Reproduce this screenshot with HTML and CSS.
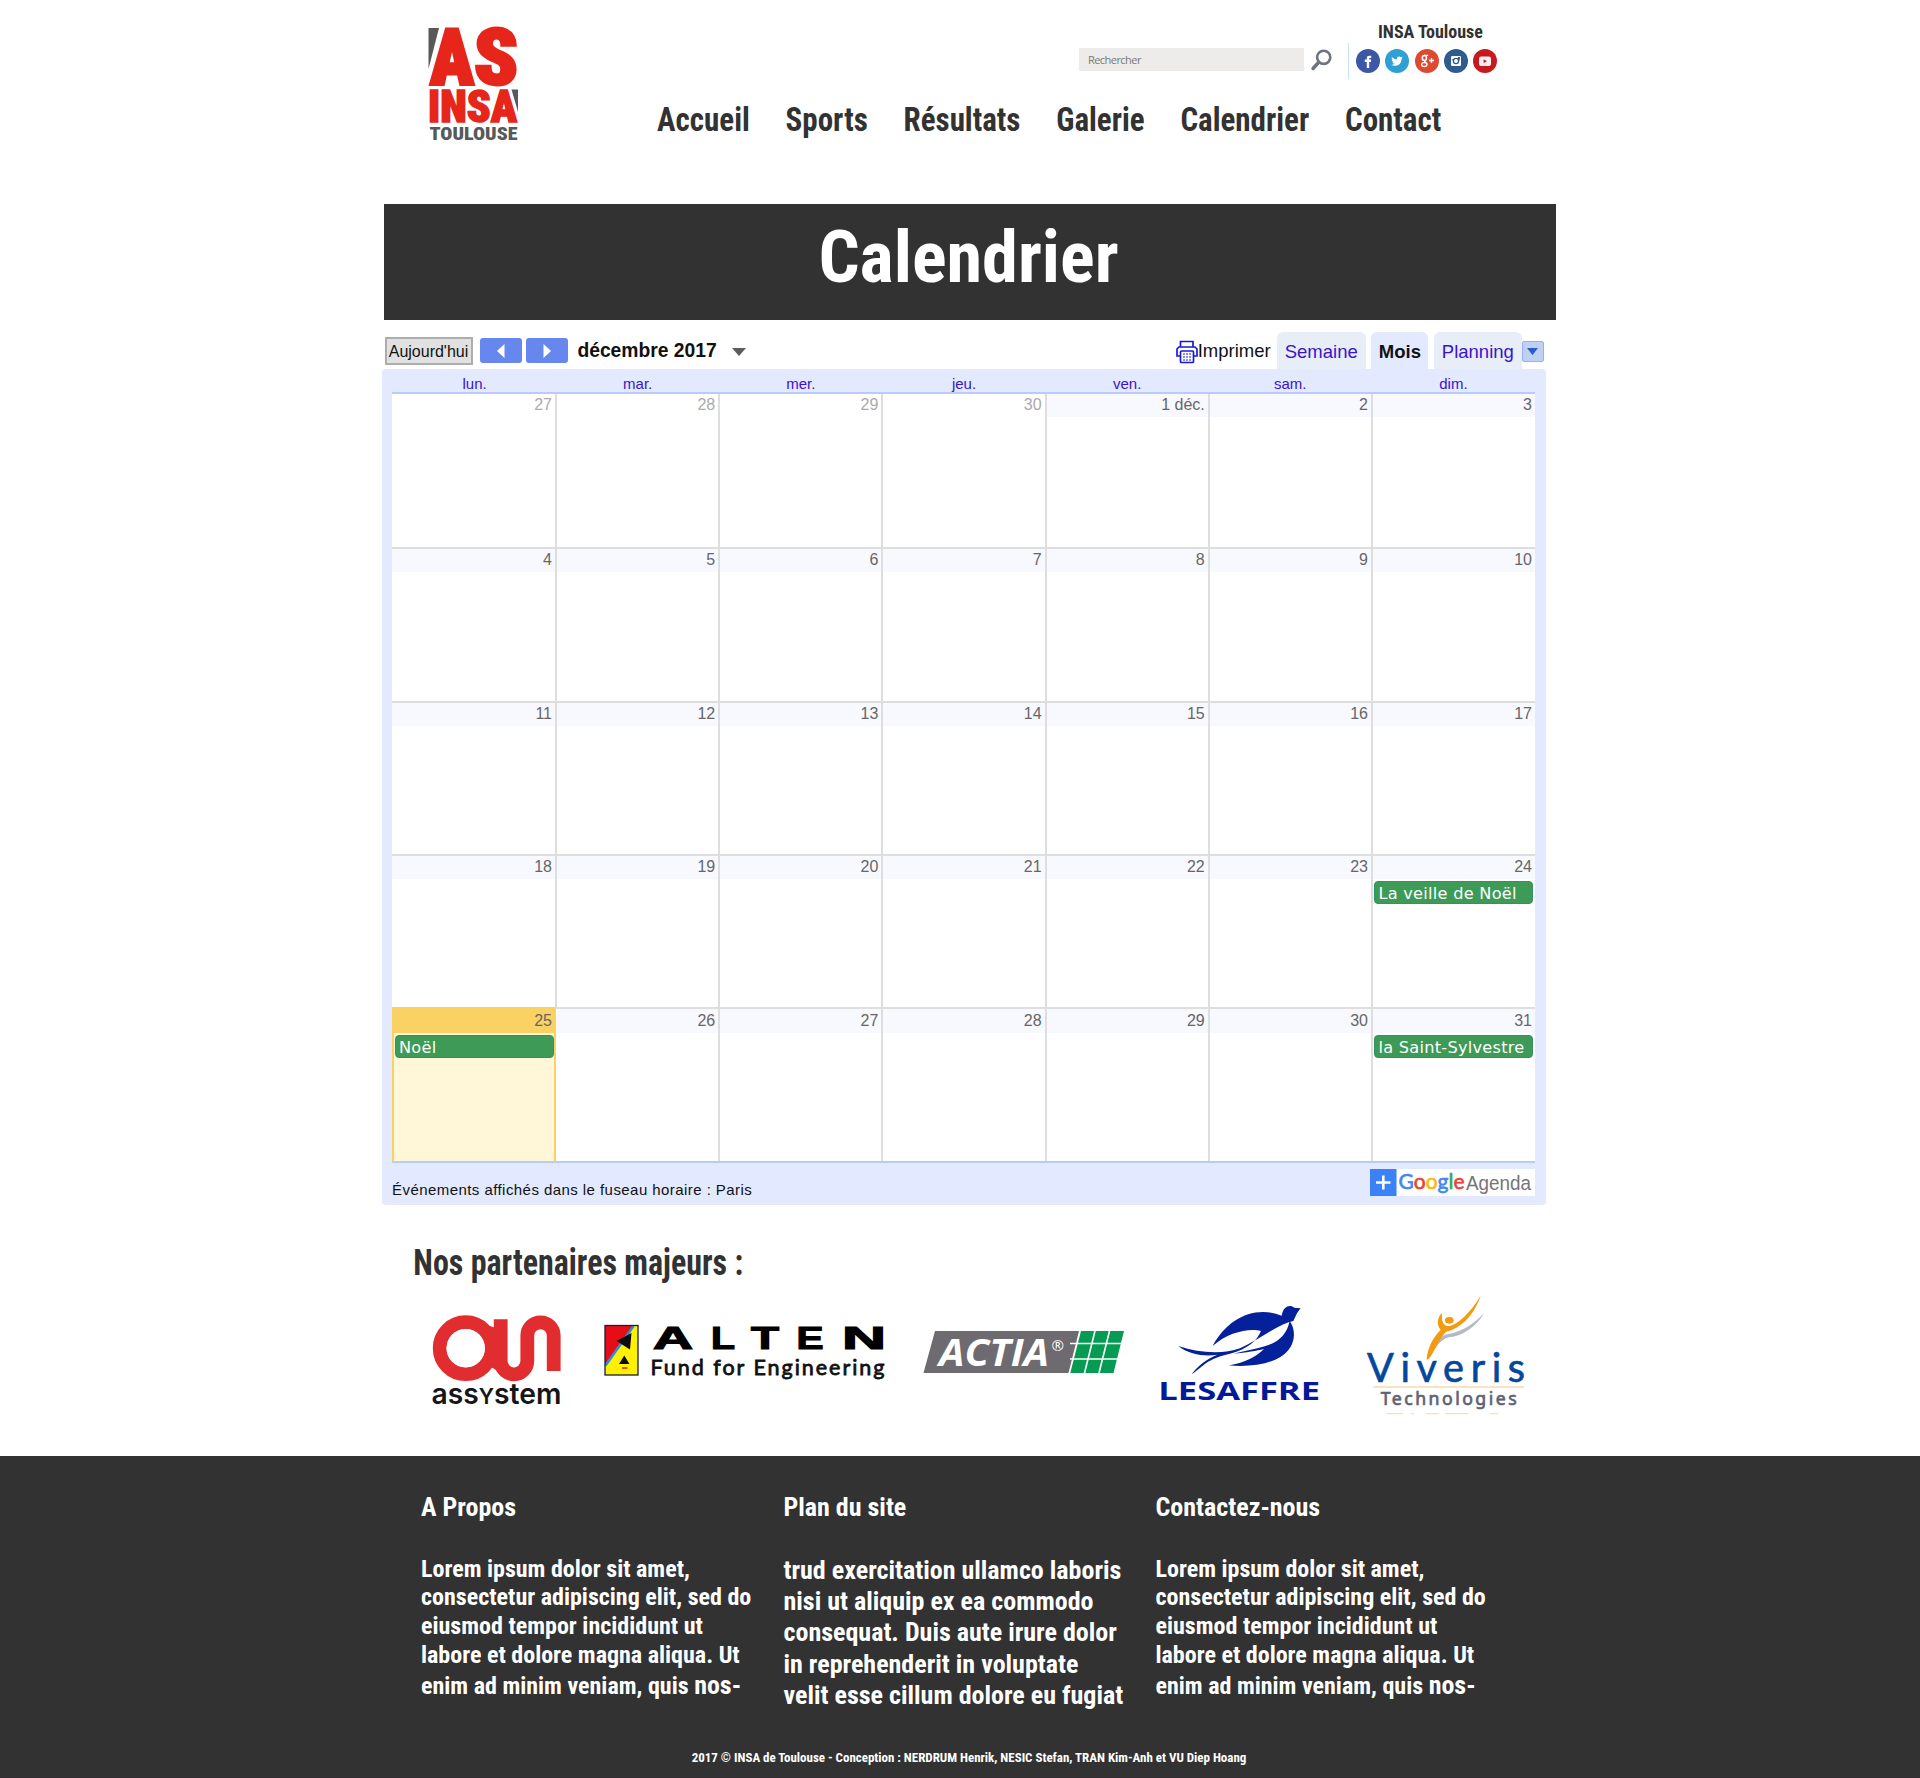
FILE: index.html
```html
<!DOCTYPE html>
<html lang="fr">
<head>
<meta charset="utf-8">
<title>AS INSA Toulouse - Calendrier</title>
<link rel="stylesheet" href="styles.css">
</head>
<body>
<div class="page">
  <header class="header">
    <a class="logo">
      <svg width="92" height="120" viewBox="427 24 92 120" font-family="Roboto">
        <path d="M428.5 28H439L428.5 69Z" fill="#58595b"/>
        <path d="M511.500 89.500H518V112Z" fill="#58595b"/>
        <g fill="#e6251b" stroke="#e6251b" class="narrow">
          <text x="430" y="84" font-size="78" stroke-width="3" textLength="44" lengthAdjust="spacingAndGlyphs">A</text>
          <text x="474" y="84" font-size="78" stroke-width="3" textLength="44" lengthAdjust="spacingAndGlyphs">S</text>
          <text x="428" y="121.500" font-size="44" stroke-width="1.500" textLength="89" lengthAdjust="spacingAndGlyphs">INSA</text>
        </g>
        <text x="429.500" y="140.300" font-size="19" fill="#58595b" textLength="88" lengthAdjust="spacingAndGlyphs" class="narrow">TOULOUSE</text>
      </svg>
    </a>
    <div class="header-main">
      <div class="tools">
        <div class="search">Rechercher</div>
        <svg class="search-icon" width="22" height="22" viewBox="0 0 22 22" fill="none" stroke="#6c7480">
          <circle cx="12.700" cy="8.300" r="6.600" stroke-width="2.600"/>
          <path d="M7.500 13.500L2 19.500" stroke-width="3.400" stroke-linecap="round"/>
        </svg>
        <div class="social">
          <div class="social-title">INSA Toulouse</div>
          <div class="social-row">
            <svg viewBox="0 0 24 24"><circle cx="12" cy="12" r="12" fill="#3d57a7"/><path d="M10.800 19V13H8.800V10.600H10.800V9.200C10.800 7 12 6.300 15.200 6.800V9H14.200C13.300 9 13.200 9.300 13.200 10V10.600H15.200L14.900 13H13.200V19Z" fill="#fff"/></svg>
            <svg viewBox="0 0 24 24"><circle cx="12" cy="12" r="12" fill="#2ea0d5"/><path transform="translate(6.200 6.400) scale(.48)" fill="#fff" d="M23.953 4.570a10 10 0 01-2.825.775 4.958 4.958 0 002.163-2.723c-.951.555-2.005.959-3.127 1.184a4.920 4.920 0 00-8.384 4.482C7.690 8.095 4.067 6.130 1.640 3.162a4.822 4.822 0 00-.666 2.475c0 1.710.870 3.213 2.188 4.096a4.904 4.904 0 01-2.228-.616v.060a4.923 4.923 0 003.946 4.827 4.996 4.996 0 01-2.212.085 4.936 4.936 0 004.604 3.417 9.867 9.867 0 01-6.102 2.105c-.390 0-.779-.023-1.170-.067a13.995 13.995 0 007.557 2.209c9.053 0 13.998-7.496 13.998-13.985 0-.210 0-.420-.015-.630A9.935 9.935 0 0024 4.590z"/></svg>
            <svg viewBox="0 0 24 24" fill="none" stroke="#fff"><circle cx="12" cy="12" r="12" fill="#dc4a31" stroke="none"/><ellipse cx="9.400" cy="9" rx="2.100" ry="2.500" stroke-width="1.500"/><path d="M9 6.300H13.200M9.800 11.500C8.400 12.500 11.800 13.300 12 15.400" stroke-width="1.300"/><ellipse cx="9.300" cy="15.600" rx="2.700" ry="1.900" stroke-width="1.300"/><path d="M16.500 9V14M14 11.500H19" stroke-width="1.400"/></svg>
            <svg viewBox="0 0 24 24"><circle cx="12" cy="12" r="12" fill="#2f5b8f"/><rect x="7" y="7" width="10" height="10" rx="1.200" fill="#fff"/><rect x="14" y="8" width="2" height="2" fill="#2f5b8f"/><circle cx="12" cy="12" r="2.600" fill="#fff" stroke="#2f5b8f" stroke-width="1.300"/><path d="M7.800 10.800H9.300M14.700 10.800H16.200" stroke="#2f5b8f"/></svg>
            <svg viewBox="0 0 24 24"><circle cx="12" cy="12" r="12" fill="#c71a1f"/><rect x="6" y="7.500" width="12" height="9.500" rx="2.200" fill="#f5f1f1"/><path d="M10.600 10.300L14 12.200L10.600 14.100Z" fill="#c71a1f"/></svg>
          </div>
        </div>
      </div>
      <nav class="nav"><a>Accueil</a><a>Sports</a><a>Résultats</a><a>Galerie</a><a>Calendrier</a><a>Contact</a></nav>
    </div>
  </header>

  <h1 class="banner">Calendrier</h1>

  <div class="toolbar">
    <button class="today-btn">Aujourd'hui</button>
    <button class="arrow"><svg width="8" height="14" viewBox="0 0 8 14"><path d="M7.500 0V14L0 7Z" fill="#fff"/></svg></button>
    <button class="arrow"><svg width="8" height="14" viewBox="0 0 8 14"><path d="M.5 0V14L8 7Z" fill="#fff"/></svg></button>
    <span class="month">décembre 2017</span>
    <svg class="month-caret" width="14" height="8" viewBox="0 0 14 8"><path d="M0 0H14L7 8Z" fill="#5c5c5c"/></svg>
    <svg class="print-icon" width="22" height="24" viewBox="0 0 22 24" fill="none" stroke="#1a1ad6" stroke-width="1.700">
      <path d="M4.500 7V1.500H17V7M4 16H1V9L3 7H19L21 9V16H18"/>
      <rect x="4.500" y="11" width="13" height="11.500" rx="1" fill="#fff"/>
      <path d="M7 14H15.500M7 17H15.500M7 20H15.500" stroke-width="1" stroke-dasharray="2 1"/>
    </svg>
    <span class="print">Imprimer</span>
    <div class="tabs"><a class="tab tab-week">Semaine</a><a class="tab tab-active">Mois</a><a class="tab tab-plan">Planning</a></div>
    <span class="more"><svg width="11" height="7" viewBox="0 0 11 7"><path d="M0 0H11L5.500 7Z" fill="#2a5bcc"/></svg></span>
  </div>

  <section class="calendar">
    <div class="weekdays"><span>lun.</span><span>mar.</span><span>mer.</span><span>jeu.</span><span>ven.</span><span>sam.</span><span>dim.</span></div>
    <div class="grid">
      <div class="day out"><b>27</b></div><div class="day out"><b>28</b></div><div class="day out"><b>29</b></div><div class="day out"><b>30</b></div><div class="day first"><b>1 déc.</b></div><div class="day first"><b>2</b></div><div class="day first"><b>3</b></div>
      <div class="day"><b>4</b></div><div class="day"><b>5</b></div><div class="day"><b>6</b></div><div class="day"><b>7</b></div><div class="day"><b>8</b></div><div class="day"><b>9</b></div><div class="day"><b>10</b></div>
      <div class="day"><b>11</b></div><div class="day"><b>12</b></div><div class="day"><b>13</b></div><div class="day"><b>14</b></div><div class="day"><b>15</b></div><div class="day"><b>16</b></div><div class="day"><b>17</b></div>
      <div class="day"><b>18</b></div><div class="day"><b>19</b></div><div class="day"><b>20</b></div><div class="day"><b>21</b></div><div class="day"><b>22</b></div><div class="day"><b>23</b></div><div class="day"><b>24</b><span class="event">La veille de Noël</span></div>
      <div class="day last today"><b>25</b><span class="event">Noël</span></div><div class="day last"><b>26</b></div><div class="day last"><b>27</b></div><div class="day last"><b>28</b></div><div class="day last"><b>29</b></div><div class="day last"><b>30</b></div><div class="day last"><b>31</b><span class="event">la Saint-Sylvestre</span></div>
    </div>
    <div class="calendar-foot">
      <span class="timezone">Événements affichés dans le fuseau horaire : Paris</span>
      <svg class="agenda" width="165" height="27" viewBox="0 0 165 27">
        <rect width="165" height="27" fill="#fff"/><rect width="26.500" height="27" fill="#3b82f8"/>
        <path d="M13.300 6.500V20.500M6 13.500H20.500" stroke="#fff" stroke-width="2.600"/>
        <text x="28.500" y="19.500" font-family="Lato" font-size="21" stroke-width=".6" textLength="66" lengthAdjust="spacingAndGlyphs"><tspan fill="#4285f4" stroke="#4285f4">G</tspan><tspan fill="#ea4335" stroke="#ea4335">o</tspan><tspan fill="#fbbc05" stroke="#fbbc05">o</tspan><tspan fill="#4285f4" stroke="#4285f4">g</tspan><tspan fill="#34a853" stroke="#34a853">l</tspan><tspan fill="#ea4335" stroke="#ea4335">e</tspan></text>
        <text x="96" y="21" font-family="Liberation Sans" font-size="20.500" fill="#757575" textLength="65" lengthAdjust="spacingAndGlyphs">Agenda</text>
      </svg>
    </div>
  </section>

  <section class="partners">
    <h2>Nos partenaires majeurs :</h2>
    <div class="partner-row">
      <svg width="136" height="130" viewBox="430 1290 136 130">
        <g fill="none" stroke="#e12d2f" stroke-width="13.800">
          <circle cx="465.700" cy="1348.200" r="26"/>
          <path d="M500.700 1319.300V1361A13.200 13.200 0 0 0 527.300 1361V1335.500A13.200 13.200 0 0 1 553.700 1335.500V1371"/>
        </g>
        <path d="M487 1325L496 1328V1370L486 1364Q492 1348 486 1336Z" fill="#e12d2f"/>
        <circle cx="465.700" cy="1348.200" r="19.200" fill="#fff"/>
        <text x="431.500" y="1404" font-family="Inter" font-weight="600" font-size="29" fill="#161616" textLength="130" lengthAdjust="spacingAndGlyphs">ass<tspan font-size="22">Y</tspan>stem</text>
      </svg>
      <svg width="288" height="130" viewBox="600 1290 288 130">
        <rect x="605" y="1325.500" width="33" height="49.500" fill="#fff100"/>
        <path d="M605 1325.500H633.500L605 1366Z" fill="#e60d17"/>
        <path d="M605.500 1365.500L633.500 1326" stroke="#2a8fd8" stroke-width="2.600"/>
        <path d="M631.500 1333L616.500 1341L630 1349.500ZM624.300 1355.500L619 1364H629.500Z" fill="#0c0c0c"/>
        <path d="M622 1368H627.500" stroke="#e6401b" stroke-width="1.800"/>
        <rect x="605" y="1325.500" width="33" height="49.500" fill="none" stroke="#1b1d3a" stroke-width="1.300"/>
        <g font-family="Liberation Sans" font-weight="700" font-size="31.500" fill="#000" stroke="#000" stroke-width="1.200">
          <text x="653" y="1348.500" textLength="40" lengthAdjust="spacingAndGlyphs">A</text>
          <text x="711" y="1348.500" textLength="24" lengthAdjust="spacingAndGlyphs">L</text>
          <text x="751" y="1348.500" textLength="28" lengthAdjust="spacingAndGlyphs">T</text>
          <text x="796.500" y="1348.500" textLength="27" lengthAdjust="spacingAndGlyphs">E</text>
          <text x="842" y="1348.500" textLength="44" lengthAdjust="spacingAndGlyphs">N</text>
        </g>
        <text x="650.500" y="1374.500" font-family="Lato" font-size="21.500" fill="#111" stroke="#111" stroke-width=".8" textLength="234">Fund for Engineering</text>
      </svg>
      <svg width="204" height="130" viewBox="922 1290 204 130">
        <path d="M935 1331H1079L1068.500 1373H923.500Z" fill="#6d6a70"/>
        <path d="M1081 1331H1124L1113.500 1373H1070.300Z" fill="#069b53"/>
        <path d="M1095 1331L1084.500 1373M1109.500 1331L1099 1373M1070 1343.500H1124M1070 1359H1124" stroke="#fff" stroke-width="1.600"/>
        <text x="939" y="1366" font-family="Open Sans" font-style="italic" font-weight="700" font-size="38" fill="#fff" textLength="110" lengthAdjust="spacingAndGlyphs">ACTIA</text>
        <text x="1051.500" y="1350.500" font-family="Open Sans" font-size="15" fill="#fff">®</text>
      </svg>
      <svg width="164" height="130" viewBox="1160 1290 164 130">
        <g transform="translate(1140 1285) scale(.33333)">
          <g fill="#04209a">
            <path d="M218 183C262 100 345 60 425 92C430 60 452 58 463 68L482 70C472 80 468 92 460 108L446 112C400 128 350 168 300 190C250 208 180 205 115 183C150 212 200 214 232 209C200 222 170 245 155 268C195 240 200 222 270 206C325 192 352 165 363 138C330 128 265 140 218 183Z"/>
            <path d="M449 108C472 140 465 190 420 217C380 240 320 246 267 241C310 234 350 215 372 192C350 197 320 203 280 206C315 198 345 192 374 184C415 172 440 150 449 108Z"/>
          </g>
          <text x="55" y="346" font-family="Open Sans" font-weight="700" font-size="77" fill="#04189a" textLength="485" lengthAdjust="spacingAndGlyphs">LESAFFRE</text>
        </g>
      </svg>
      <svg width="172" height="130" viewBox="1358 1290 172 130">
        <g transform="translate(1140 1285) scale(.33333)">
          <text x="681" y="290" font-family="Lato" font-size="119" fill="#04479b" stroke="#04479b" stroke-width="2" textLength="474">Viveris</text>
          <path d="M868 214C880 175 905 150 922 148C970 140 1010 110 1032 84C1010 125 965 155 925 157C900 165 885 190 868 214Z" fill="#b4bac4"/>
          <path d="M860 224C862 185 885 150 902 135C888 118 893 95 906 84C904 105 908 122 925 124C965 115 1002 65 1022 32C1005 85 965 130 918 140C895 165 884 200 866 222Z" fill="#f39a10"/>
          <ellipse cx="928" cy="106" rx="13" ry="10" fill="#f39a10"/>
          <path d="M700 306H1152" stroke="#fbd9a8" stroke-width="5"/>
          <text x="722" y="360" font-family="Noto Sans" font-size="53" fill="#5c6272" stroke="#5c6272" stroke-width="2" textLength="408">Technologies</text>
          <path d="M740 386H790M812 386H822M858 386H898M915 386H985M1050 386H1075" stroke="#fbe0ae" stroke-width="4"/>
        </g>
      </svg>
    </div>
  </section>
</div>

<footer class="footer">
  <div class="footer-cols">
    <section>
      <h3>A Propos</h3>
      <p class="small">Lorem ipsum dolor sit amet,<br>consectetur adipiscing elit, sed do<br>eiusmod tempor incididunt ut<br>labore et dolore magna aliqua. Ut<span class="last-line">enim ad minim veniam, quis <em>nos-</em></span></p>
    </section>
    <section>
      <h3>Plan du site</h3>
      <p>trud exercitation ullamco laboris<br>nisi ut aliquip ex ea commodo<br>consequat. Duis aute irure dolor<br>in reprehenderit in voluptate<br>velit esse cillum dolore eu fugiat</p>
    </section>
    <section>
      <h3>Contactez-nous</h3>
      <p class="small">Lorem ipsum dolor sit amet,<br>consectetur adipiscing elit, sed do<br>eiusmod tempor incididunt ut<br>labore et dolore magna aliqua. Ut<span class="last-line">enim ad minim veniam, quis <em>nos-</em></span></p>
    </section>
  </div>
  <div class="copyright">2017 © INSA de Toulouse - Conception : NERDRUM Henrik, NESIC Stefan, TRAN Kim-Anh et VU Diep Hoang</div>
</footer>
</body>
</html>
```
FILE: styles.css
```css
* { box-sizing: border-box; }
body {
  margin: 0;
  background: #fff;
  color: #323232;
  font-family: "Roboto Condensed", Roboto, sans-serif;
  font-stretch: 75%;
  font-weight: 700;
}
h1, h2, h3, p { margin: 0; font-weight: 700; }
svg { display: block; flex: none; overflow: visible; font-weight: 400; font-stretch: 100%; }
.narrow { font-stretch: 75%; font-weight: 900; }
.page { width: 1172px; margin-left: 384px; }

/* header */
.header { display: flex; height: 204px; }
.logo { margin: 24px 137.5px 0 43px; }
.header-main { width: 880px; }
.tools { display: flex; height: 79px; padding-left: 422.5px; }
.search {
  width: 225px;
  height: 23px;
  margin-top: 48px;
  padding-left: 9px;
  background: #eeecea;
  color: #777;
  font: 400 11px/24px "Open Sans", sans-serif;
  font-stretch: 100%;
  letter-spacing: -.55px;
}
.search-icon { margin: 49px 15px 0 7px; }
.social-title { padding: 21px 0 0 30px; height: 43px; font-size: 18px; line-height: 22px; white-space: nowrap; }
.social-row {
  display: flex;
  gap: 5.3px;
  height: 36px;
  padding: 6px 0 0 7px;
  border-left: 1px solid #c5e3f0;
}
.social-row svg { width: 24px; height: 24px; }
.nav {
  display: flex;
  gap: 39.3px;
  margin-top: 20px;
  font-size: 34px;
  line-height: 40px;
  transform: scaleX(.912);
  transform-origin: 0 0;
}

.banner {
  height: 116px;
  padding: 11px 3px 0 0;
  background: #323232;
  color: #fff;
  text-align: center;
  font-size: 72.3px;
  line-height: 85px;
}

/* calendar toolbar */
.toolbar {
  display: flex;
  align-items: center;
  height: 49px;
  padding-top: 12px;
  color: #111;
  font-family: "Liberation Sans", Arial, sans-serif;
  font-weight: 400;
  font-size: 18.5px;
}
.today-btn {
  width: 88px;
  height: 28px;
  margin: 0 7px 0 .5px;
  padding: 0;
  border: 2px solid #adadad;
  background: #e1e1e1;
  color: #111;
  font: 400 16px/26px "Liberation Sans", Arial, sans-serif;
}
.arrow {
  display: flex;
  align-items: center;
  justify-content: center;
  width: 42px;
  height: 25px;
  margin-right: 4.7px;
  padding: 0;
  border: 0;
  border-radius: 3px;
  background: #6688ee;
}
.month { margin-left: 4.5px; font-weight: 700; font-size: 19.3px; white-space: nowrap; }
.month-caret { margin: 3px 0 0 15.5px; }
.print-icon { margin: 2px 0 0 429.5px; }
.print { margin-right: 6px; }
.tabs { display: flex; gap: 5.7px; height: 37px; }
.tab {
  height: 37px;
  border-radius: 6px 6px 0 0;
  background: #e8eef7;
  color: #3a12cf;
  text-align: center;
  line-height: 40px;
}
.tab-week { width: 89px; }
.tab-active { width: 57px; background: #e3e9ff; color: #111; font-weight: 700; }
.tab-plan { width: 87.5px; }
.more {
  display: flex;
  align-items: center;
  justify-content: center;
  width: 22px;
  height: 21px;
  margin-top: 2px;
  border: 1.5px solid #96b2ee;
  border-radius: 2px;
  background: #bfd0f2;
}

/* calendar */
.calendar {
  width: 1164px;
  height: 836px;
  margin-left: -2px;
  padding: 0 11px 0 10px;
  border-radius: 4px;
  background: #e3e9ff;
  font-family: "Liberation Sans", Arial, sans-serif;
  font-weight: 400;
}
.weekdays {
  display: grid;
  grid-template-columns: repeat(7, 1fr);
  height: 23px;
  padding: 6px 0 0 1px;
  color: #3a12cf;
  text-align: center;
  font-size: 15px;
  line-height: 18px;
}
.grid {
  display: grid;
  grid-template-columns: 165px repeat(5, 163.2px) 162px;
  grid-template-rows: 155px 154px 153px 153px 152px;
  border-top: 2px solid #b9cbfb;
  border-bottom: 2px solid #b9cbfb;
  background: #fff;
}
.day { border-right: 2px solid #dedede; border-bottom: 2px solid #dedede; }
.day:nth-child(7n) { border-right: 0; }
.last { border-bottom: 0; }
.day b {
  display: block;
  height: 22.5px;
  padding-right: 3px;
  background: #f8f9ff;
  color: #666;
  text-align: right;
  font-weight: 400;
  font-size: 16px;
  line-height: 22px;
}
.out b, .first b { line-height: 21px; }
.out b { background: none; color: #aaa; }
.last b { height: 24px; line-height: 23px; }
.event {
  display: block;
  height: 23px;
  margin: 2px 1.5px 0;
  padding-left: 3px;
  border: 1px solid #329262;
  border-radius: 4px;
  background: #3d9a57;
  color: #fff;
  font: 400 16.2px/24px "DejaVu Sans", Verdana, sans-serif;
  letter-spacing: .25px;
  white-space: nowrap;
}
.today { border: solid #fad163; border-width: 0 2px; margin-right: 1px; background: #fff7d7; }
.today b { margin: -2px -2px 0; height: 26px; padding-right: 4px; background: #fad163; line-height: 27px; }
.today .event { margin: 2px 0 0 1px; }
.calendar-foot { display: flex; justify-content: space-between; }
.timezone { padding-top: 17.5px; color: #111; font-size: 15px; line-height: 18px; letter-spacing: .44px; }
.agenda { margin-top: 5.5px; }

/* partners */
.partners { height: 251px; padding-top: 37px; }
.partners h2 {
  padding-left: 33px;
  font-size: 36px;
  line-height: 42px;
  transform: scaleX(.888);
  transform-origin: 0 0;
}
.partner-row { display: flex; gap: 34px; padding: 6px 0 0 46px; }

/* footer */
.footer { height: 322px; padding-top: 36px; border-bottom: 1px solid #332b2f; background: #323232; color: #fff; }
.footer-cols { display: grid; grid-template-columns: 362.5px 372px 400px; height: 219px; margin-left: 421px; }
.footer h3 { margin-bottom: 32.5px; font-size: 26px; line-height: 30px; }
.footer p { font-size: 26px; line-height: 31.4px; white-space: nowrap; }
.footer .small { font-size: 24px; line-height: 28.7px; }
.last-line { display: block; line-height: 33px; }
.last-line em { font-style: normal; font-size: 26px; }
.copyright { margin: 38.5px 0 0 18px; text-align: center; font-size: 13px; line-height: 16px; letter-spacing: -.025px; }
```
